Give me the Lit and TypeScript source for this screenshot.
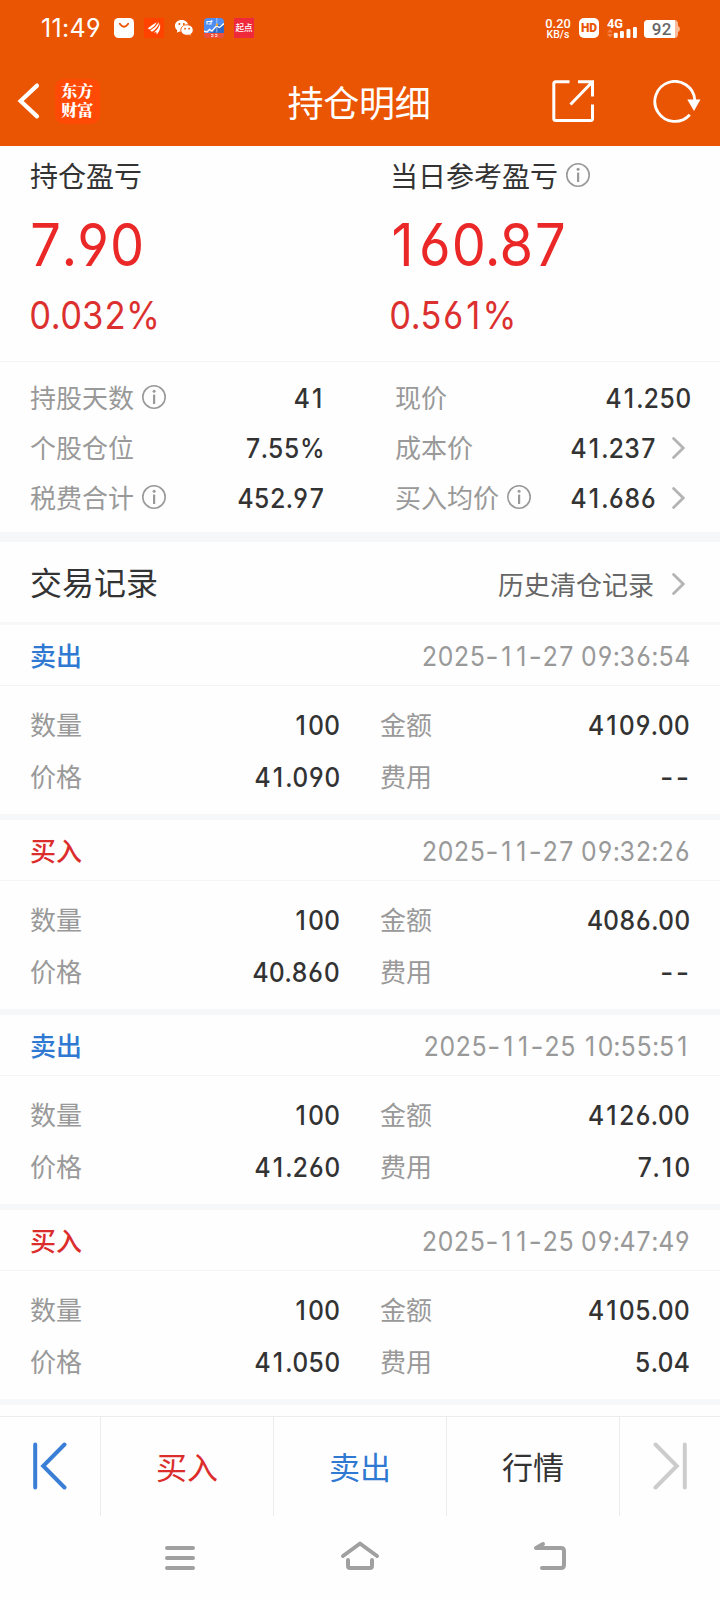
import { LitElement, html, css } from "lit";
import { customElement, property } from "lit/decorators.js";

interface Trade {
  side: "buy" | "sell";
  time: string;
  price: string;
  amount: string;
  fee: string;
}

const TRADES: Trade[] = [
  { side: "sell", time: "2025-11-27 09:36:54", price: "41.090", amount: "4109.00", fee: "--" },
  { side: "buy", time: "2025-11-27 09:32:26", price: "40.860", amount: "4086.00", fee: "--" },
  { side: "sell", time: "2025-11-25 10:55:51", price: "41.260", amount: "4126.00", fee: "7.10" },
  { side: "buy", time: "2025-11-25 09:47:49", price: "41.050", amount: "4105.00", fee: "5.04" },
];

const shared = css`
  * { box-sizing: border-box; }
  svg { display: block; flex: none; }
  .num {
    font-family: Inter, Roboto, "Noto Sans CJK SC", sans-serif; white-space: nowrap;
    font-feature-settings: "cv03", "cv04", "tnum"; font-kerning: none;
    transform: scaleX(0.92); transform-origin: right center;
  }
  .one { display: inline-block; width: 0.6em; text-align: center; letter-spacing: 0; font-feature-settings: normal; }
  .dash { display: inline-block; transform: scaleX(1.15); }
`;

const infoIcon = html`<svg class="info" width="24" height="24" viewBox="0 0 24 24">
  <circle cx="12" cy="12" r="11.2" fill="none" stroke="#999" stroke-width="1.6" />
  <rect x="11" y="9.6" width="2.2" height="9.4" rx="0.6" fill="#999" />
  <circle cx="12.1" cy="6.3" r="1.5" fill="#999" />
</svg>`;

const chevron = html`<svg width="13" height="22" viewBox="0 0 13 22">
  <path d="M1.6 1.6 L11.2 11 L1.6 20.4" fill="none" stroke="#b4b4b4" stroke-width="2.8" stroke-linecap="round" stroke-linejoin="miter" />
</svg>`;

// Digit one and the hyphen get their own boxes so that their advances can be tuned.
const figures = (text: string) =>
  [...text].map((c) =>
    c === "1" ? html`<span class="one">1</span>` : c === "-" ? html`<span class="dash">-</span>` : c);

@customElement("status-bar")
class StatusBar extends LitElement {
  static styles = [shared, css`
    :host { display: flex; height: 56px; padding: 0 40px 0 41px; align-items: center; color: #fff; }
    .time { font-size: 25px; line-height: 30px; width: 73px; transform: none; font-feature-settings: "cv03", "cv04"; letter-spacing: 0.3px; }
    .apps { display: flex; gap: 10px; }
    .spacer { flex: 1; }
    .net text { font-weight: 500; }
    .net { margin-right: 3px; }
    .hd { margin-right: 8px; }
    .signal { margin-right: 7px; }
    svg text { font-family: Roboto, "Noto Sans CJK SC", sans-serif; }
  `];
  render() {
    return html`
      <div class="time num">11:49</div>
      <div class="apps">
        <svg width="20" height="20" viewBox="0 0 20 20">
          <rect width="20" height="20" rx="4.5" fill="#fff" />
          <path d="M5.8 5.8 Q10 11.8 14.2 5.8" fill="none" stroke="#ea5503" stroke-width="1.9" stroke-linecap="round" />
        </svg>
        <svg width="20" height="20" viewBox="0 0 20 20">
          <rect width="20" height="20" fill="#ff4200" />
          <path d="M3.6 10.6 Q7 7.400 12.800 4.300 Q11 8.500 6 11.400 Z M6.200 12.600 Q12 9 15 4 Q14.800 9.500 8 13.800 Z M9.600 14.800 Q14.600 11 16 5.800 Q17 12 12.800 16.600 L12.200 14 Z" fill="#fff" />
        </svg>
        <svg width="20" height="20" viewBox="0 0 20 20">
          <path d="M7.6 2 C3.600 2 1 4.600 1 7.800 C1 9.800 2 11.400 3.400 12.500 L2.800 14.800 L5.400 13.500 L7.600 13.800 C11.600 13.800 14.200 11 14.200 7.800 C14.200 4.600 11.600 2 7.600 2 Z" fill="#fff" />
          <path d="M13 6.800 C9.400 6.800 6.800 9.100 6.800 12.100 C6.800 15 9.400 17.300 13 17.300 L15.100 17 L17.300 18.200 L16.800 16.300 C18.300 15.300 19.200 13.900 19.200 12.100 C19.200 9.100 16.600 6.800 13 6.800 Z" fill="#fff" stroke="#ea5503" stroke-width="0.9" />
          <circle cx="5.400" cy="6" r="1" fill="#ea5503" /><circle cx="9.800" cy="6" r="1" fill="#ea5503" />
          <circle cx="11.100" cy="10.700" r="0.900" fill="#ea5503" /><circle cx="15.100" cy="10.700" r="0.900" fill="#ea5503" />
        </svg>
        <svg width="20" height="20" viewBox="0 0 20 20">
          <defs><clipPath id="r"><rect width="20" height="20" rx="4" /></clipPath></defs>
          <g clip-path="url(#r)">
            <rect width="20" height="20" fill="#4f8ef0" />
            <path d="M13 7 L20 7 L20 15 L6 15 Z" fill="#2e6ac6" />
            <rect y="15" width="20" height="5" fill="#f0503a" />
            <path d="M0 13.300 L3 14 L5.500 11.500 L8 13 L12.500 7.800 L15.500 9.500 L20 5.600" fill="none" stroke="#fff" stroke-width="1.400" />
            <path d="M12.800 0 V14.500" stroke="#c8dcff" stroke-width="0.700" />
            <circle cx="13" cy="6.700" r="1.200" fill="#f5a623" />
            <path d="M3 6.500 V3.500 H7 V6 H4.500 M7 2.500 L8.500 3.500" fill="none" stroke="#fff" stroke-width="1.100" />
            <path d="M7 16.500 H9 V18.500 H7 M11 16.500 H13 V18.500 H11" fill="none" stroke="#ffd9d0" stroke-width="0.900" />
          </g>
        </svg>
        <svg width="20" height="20" viewBox="0 0 20 20">
          <rect width="20" height="20" fill="#f0283c" />
          <text x="10" y="13.200" font-size="8.600" font-weight="500" fill="#fff" text-anchor="middle">起点</text>
        </svg>
      </div>
      <div class="spacer"></div>
      <svg class="net" width="36" height="28" viewBox="-4 -3 36 28" fill="#fff" text-anchor="middle">
        <text x="14" y="10.500" font-size="12.800">0.20</text>
        <text x="14" y="20.500" font-size="10.500">KB/s</text>
      </svg>
      <svg class="hd" width="20" height="20" viewBox="0 0 20 20">
        <rect width="20" height="20" rx="5" fill="#fff" />
        <text x="10" y="14.300" font-size="12" font-weight="900" fill="#ea5503" text-anchor="middle">HD</text>
      </svg>
      <svg class="signal" width="30" height="26" viewBox="0 -3 30 26">
        <text x="0" y="9.600" font-size="12.800" font-weight="700" fill="#fff">4G</text>
        <path d="M0 14.500 L3 11 L6 14.500 Z M0 16 L3 19.500 L6 16 Z" fill="#f5824a" />
        <g fill="#fff">
          <rect x="6.800" y="14.800" width="3.900" height="5.200" rx="1" />
          <rect x="13" y="13" width="3.900" height="7" rx="1" />
          <rect x="19.500" y="11" width="3.900" height="9" rx="1" />
          <rect x="26" y="9" width="3.900" height="11" rx="1" />
        </g>
      </svg>
      <svg width="36" height="20" viewBox="0 0 36 20">
        <rect y="2" width="34" height="18" rx="4" fill="#f9bb99" />
        <path d="M33.500 7.500 Q36 8.500 36 11 Q36 13.500 33.500 14.500 Z" fill="#f9bb99" />
        <path d="M4 2 H31 V20 H4 Q0 20 0 16 V6 Q0 2 4 2 Z" fill="#fff" />
        <text x="17.800" y="17" font-size="17" font-weight="500" fill="#666" text-anchor="middle" letter-spacing="0.500">92</text>
      </svg>
    `;
  }
}

@customElement("nav-header")
class NavHeader extends LitElement {
  static styles = [shared, css`
    :host { display: grid; grid-template-columns: 1fr auto 1fr; height: 90px; padding: 0 19px 0 17px; align-items: center; color: #fff; }
    .left { display: flex; align-items: center; gap: 15px; }
    .logo text { font: 900 16px "Noto Serif CJK SC", "Noto Sans CJK SC", sans-serif; }
    .title { font-size: 36px; line-height: 48px; letter-spacing: -0.2px; }
    .right { display: flex; align-items: center; justify-content: flex-end; gap: 58px; }
  `];
  render() {
    return html`
      <div class="left">
        <svg width="23" height="38" viewBox="0 0 23 38">
          <path d="M20 3.600 L3.600 19 L20 34.400" fill="none" stroke="#fff" stroke-width="4.200" stroke-linecap="round" stroke-linejoin="miter" />
        </svg>
        <svg class="logo" width="45" height="45" viewBox="0 0 45 45">
          <rect width="45" height="45" rx="9" fill="#ff4a05" />
          <text x="22.300" y="18.200" fill="#fff" text-anchor="middle">东方</text>
          <text x="22.300" y="37.400" fill="#fff" text-anchor="middle">财富</text>
        </svg>
      </div>
      <div class="title">持仓明细</div>
      <div class="right">
        <svg width="43" height="43" viewBox="0 0 43 43" fill="none" stroke="#fff" stroke-width="3">
          <path d="M17.500 1.800 H3.800 Q1.800 1.800 1.800 3.800 V38.500 Q1.800 40.500 3.800 40.500 H38.500 Q40.500 40.500 40.500 38.500 V24.500" />
          <path d="M26 1.800 H40.500 V16.500 M40 2.300 L18.500 24.500" />
        </svg>
        <svg width="48" height="43" viewBox="0 0 48 43">
          <path d="M36.800 34.700 A20 20 0 1 1 41.800 20" fill="none" stroke="#fff" stroke-width="2.800" />
          <path d="M34.300 19.500 H47.500 L41 31 Z" fill="#fff" />
        </svg>
      </div>
    `;
  }
}

@customElement("trade-card")
class TradeCard extends LitElement {
  @property({ attribute: false }) trade!: Trade;
  static styles = [shared, css`
    :host { display: block; height: 195px; border-bottom: 6px solid #f6f7f9; }
    .head { display: flex; align-items: center; justify-content: space-between; height: 61px; padding: 0 30px; border-bottom: 1px solid #f4f4f5; }
    .side { font-size: 26px; line-height: 36px; font-weight: 500; padding-bottom: 1px; }
    .buy { color: #dc2d2d; }
    .sell { color: #3079d2; }
    .time { font-size: 27px; line-height: 36px; color: #999; padding-top: 4px; letter-spacing: -0.1px; }
    .time .dash { margin: 0 -1.4px; }
    .body { display: grid; grid-template-columns: 310px 310px; column-gap: 40px; grid-auto-rows: 52px; padding: 13px 30px 0; }
    .cell { display: flex; align-items: center; justify-content: space-between; }
    .label { font-size: 26px; line-height: 36px; color: #999; padding-bottom: 3px; }
    .value { font-size: 27px; line-height: 36px; font-weight: 500; color: #333; padding-top: 2px; }
    .value .dash { margin-left: -1px; }
  `];
  private cell(label: string, value: string) {
    return html`<div class="cell"><span class="label">${label}</span><span class="value num">${figures(value)}</span></div>`;
  }
  render() {
    const t = this.trade;
    return html`
      <div class="head">
        <span class="side ${t.side}">${t.side === "buy" ? "买入" : "卖出"}</span>
        <span class="time num">${figures(t.time)}</span>
      </div>
      <div class="body">
        ${this.cell("数量", "100")}${this.cell("金额", t.amount)}
        ${this.cell("价格", t.price)}${this.cell("费用", t.fee)}
      </div>
    `;
  }
}

@customElement("app-root")
class AppRoot extends LitElement {
  static styles = [shared, css`
    :host {
      display: flex; flex-direction: column; width: 720px; height: 1600px; overflow: hidden;
      background: #fefefe; color: #333; font-family: "Noto Sans CJK SC", sans-serif;
    }
    .top { height: 146px; background: #ea5503; flex: none; }
    .summary { display: grid; grid-template-columns: 360px 1fr; height: 216px; padding: 11px 0 0 30px; border-bottom: 1px solid #f4f4f5; flex: none; }
    .caption { display: flex; align-items: center; gap: 8px; font-size: 28px; line-height: 36px; height: 36px; }
    .caption .info { margin-bottom: 1px; }
    .profit { font-size: 59px; line-height: 70px; color: #eb2828; padding-top: 17px; margin-left: -2px; letter-spacing: -1.3px; transform-origin: left center; }
    .percent { font-size: 37.5px; line-height: 46px; color: #dc3030; padding-top: 13px; margin-left: -1px; letter-spacing: -0.4px; transform-origin: left center; }
    .profit .one, .percent .one { width: 0.54em; }
    .stats { display: grid; grid-template-columns: 294px 295px; column-gap: 71px; grid-auto-rows: 50px; height: 180px; padding: 11px 30px 0; border-bottom: 10px solid #f6f7f9; flex: none; }
    .stat { display: flex; align-items: center; }
    .stat .label { font-size: 26px; line-height: 36px; color: #999; padding-bottom: 3px; }
    .stat .info { margin-left: 8px; margin-bottom: 2px; }
    .stat .value { margin-left: auto; font-size: 27px; line-height: 36px; font-weight: 500; padding-top: 2px; margin-right: -1px; }
    .stat .go { padding: 0 5px 1px 17px; }
    .section { display: flex; align-items: center; justify-content: space-between; height: 83px; padding: 0 35px 0 30px; border-bottom: 3px solid #f6f7f9; flex: none; }
    .section-title { font-size: 32px; line-height: 44px; padding-bottom: 3px; }
    .history { display: flex; align-items: center; gap: 18px; font-size: 26px; line-height: 36px; color: #666; padding-top: 4px; }
    .trades { flex: 1; min-height: 0; overflow: hidden; }
    .actions { display: grid; grid-template-columns: 101px 173px 173px 173px 1fr; height: 100px; border-top: 1px solid #ececec; flex: none; }
    .action { display: flex; align-items: center; justify-content: center; font-size: 31px; line-height: 44px; border-right: 1px solid #ececec; padding-bottom: 1px; }
    .action:last-child { border-right: 0; }
    .step { padding-bottom: 2px; }
    .buy { color: #dc2d2d; }
    .sell { color: #3079d2; }
    .system { display: grid; grid-template-columns: 1fr 1fr 1fr; height: 84px; padding: 0 90px 4px; flex: none; justify-items: center; align-items: center; }
  `];
  private stat(label: string, value: string, info = false, link = false) {
    return html`<div class="stat">
      <span class="label">${label}</span>${info ? infoIcon : ""}
      <span class="value num">${figures(value)}</span>${link ? html`<span class="go">${chevron}</span>` : ""}
    </div>`;
  }
  render() {
    return html`
      <header class="top"><status-bar></status-bar><nav-header></nav-header></header>
      <section class="summary">
        <div>
          <div class="caption"><span>持仓盈亏</span></div>
          <div class="profit num">7.90</div>
          <div class="percent num">0.032%</div>
        </div>
        <div>
          <div class="caption"><span>当日参考盈亏</span>${infoIcon}</div>
          <div class="profit num">${figures("160.87")}</div>
          <div class="percent num">${figures("0.561%")}</div>
        </div>
      </section>
      <section class="stats">
        ${this.stat("持股天数", "41", true)}${this.stat("现价", "41.250")}
        ${this.stat("个股仓位", "7.55%")}${this.stat("成本价", "41.237", false, true)}
        ${this.stat("税费合计", "452.97", true)}${this.stat("买入均价", "41.686", true, true)}
      </section>
      <section class="section">
        <span class="section-title">交易记录</span>
        <span class="history">历史清仓记录 ${chevron}</span>
      </section>
      <main class="trades">${TRADES.map((t) => html`<trade-card .trade=${t}></trade-card>`)}</main>
      <nav class="actions">
        <div class="action step">
          <svg width="34" height="48" viewBox="0 0 34 48" fill="none" stroke="#3a7fd5" stroke-width="4" stroke-linecap="round">
            <path d="M2.200 2.500 V45.500 M31.500 2.500 L10.200 24 L31.500 45.500" />
          </svg>
        </div>
        <div class="action buy">买入</div>
        <div class="action sell">卖出</div>
        <div class="action">行情</div>
        <div class="action step">
          <svg width="34" height="48" viewBox="0 0 34 48" fill="none" stroke="#ccc" stroke-width="4" stroke-linecap="round">
            <path d="M31.800 2.500 V45.500 M2.500 2.500 L23.800 24 L2.500 45.500" />
          </svg>
        </div>
      </nav>
      <footer class="system">
        <svg width="40" height="32" viewBox="0 0 40 32" fill="none" stroke="#a0a0a0" stroke-width="4" stroke-linecap="round">
          <path d="M7 8 H33 M7 18 H33 M7 28 H33" />
        </svg>
        <svg width="40" height="32" viewBox="0 0 40 32" fill="none" stroke="#a0a0a0" stroke-width="4" stroke-linecap="round" stroke-linejoin="round">
          <path d="M3 16 L20 3.500 L37 16 M8 20 V26 Q8 28 10 28 H30 Q32 28 32 26 V20" />
        </svg>
        <svg width="56" height="32" viewBox="0 0 56 32" fill="none" stroke="#a0a0a0" stroke-width="4" stroke-linecap="round" stroke-linejoin="round">
          <path d="M31 4 L24 8 H49 Q52 8 52 11 V25 Q52 28 49 28 H30" />
        </svg>
      </footer>
    `;
  }
}
